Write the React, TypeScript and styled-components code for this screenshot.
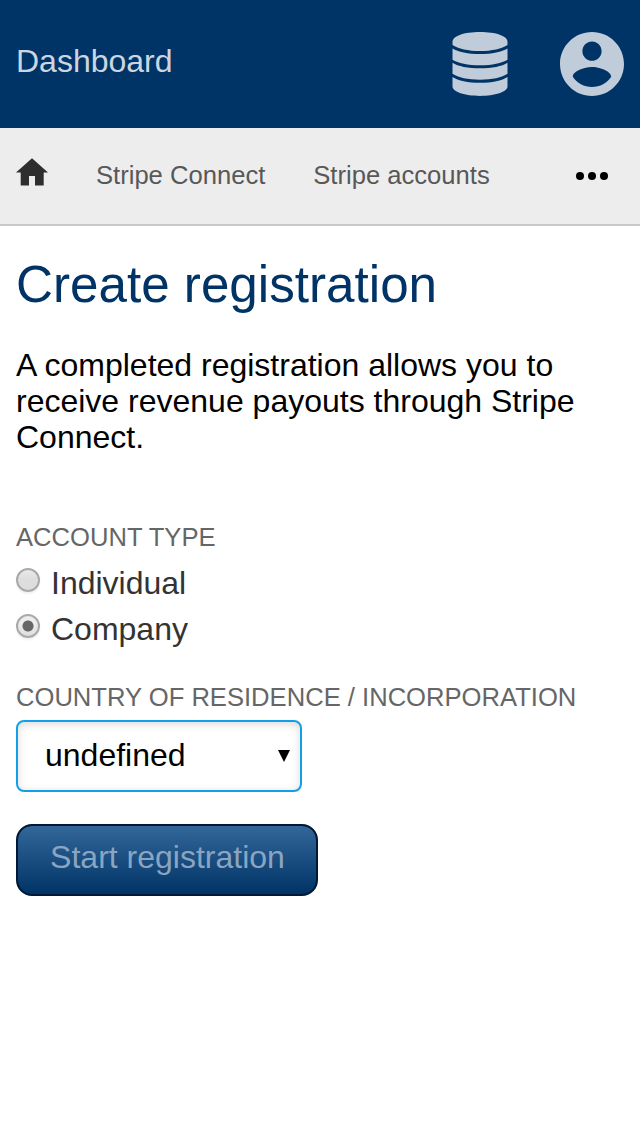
import React, { useState } from "react";
import styled, { createGlobalStyle } from "styled-components";

const GlobalStyle = createGlobalStyle`
  * { box-sizing: border-box; }
  body {
    margin: 0;
    background: #fff;
    color: #000;
    font: 32px/36px "Liberation Sans", Arial, sans-serif;
  }
`;

const Header = styled.header`
  display: flex;
  align-items: flex-start;
  height: 128px;
  padding: 32px 16px;
  background: #003366;
  color: #ccd6e0;
`;

const Brand = styled.div`
  flex: 1;
  padding-top: 11px;
`;

const HeaderIcons = styled.div`
  display: flex;
  gap: 52px;
  color: #c0ccd9;

  svg { display: block; }
`;

const Nav = styled.nav`
  display: flex;
  align-items: flex-start;
  gap: 48px;
  height: 98px;
  padding: 30px 32px 0 16px;
  background: #ededed;
  border-bottom: 2px solid #c8c8c8;
  font-size: 25.6px;
  line-height: 30px;
`;

const HomeIcon = styled.svg`
  display: block;
  fill: #2e2e2e;
`;

const NavLink = styled.a`
  padding-top: 2px;
  color: #585858;
  white-space: nowrap;
`;

const MoreIcon = styled.svg`
  display: block;
  margin: 14px 0 0 auto;
`;

const Main = styled.main`
  padding: 30px 16px 0;
`;

const Title = styled.h1`
  margin: 0 0 33px;
  color: #003366;
  font-size: 51.2px;
  line-height: 58px;
  font-weight: 400;
`;

const Intro = styled.p`
  margin: 0 0 67px;
`;

const FieldLabel = styled.div`
  color: #666;
  font-size: 25.6px;
  line-height: 30px;
  text-transform: uppercase;
  white-space: nowrap;
`;

const RadioList = styled.div`
  display: flex;
  flex-direction: column;
  gap: 10px;
  margin: 13px 0 35px;
`;

const RadioRow = styled.label`
  display: flex;
  gap: 11px;
  height: 36px;
  color: #333;
`;

const Radio = styled.input`
  appearance: none;
  flex: none;
  width: 24px;
  height: 24px;
  margin: 3px 0 0;
  border: 2px solid #a9a9a9;
  border-radius: 50%;
  background: linear-gradient(#e9e9e9, #dedede 45%, #dcdcdc);
  box-shadow: 0 2px 2px rgba(0, 0, 0, 0.06);

  &:checked {
    background: radial-gradient(circle, #666 5px, transparent 6px),
      linear-gradient(#ededed, #ededed 38%, #dedede);
  }
`;

const CountrySelect = styled.button`
  display: flex;
  align-items: center;
  justify-content: space-between;
  width: 286px;
  height: 72px;
  margin: 8px 0 32px;
  padding: 0 10px 2px 27px;
  border: 2px solid #139fe8;
  border-radius: 8px;
  background: #fff;
  box-shadow: inset 0 2px 8px rgba(0, 0, 0, 0.15);
  color: #000;
  font: inherit;
`;

const SelectArrow = styled.svg`
  margin-top: 2px;
`;

const SubmitButton = styled.button`
  display: block;
  width: 302px;
  height: 72px;
  padding: 0 0 6px 1px;
  border: 2px solid #001a33;
  border-radius: 16px;
  background: linear-gradient(#336699, #003366) padding-box, #001f3d;
  color: #8aa5c1;
  font: inherit;
`;

const DatabaseIcon = () => (
  <svg width="56" height="64" viewBox="0 0 56 64" fill="currentColor">
    <path d="M.5 9.700C.5 4 12 0 28 0s27.500 4 27.500 9.700v3.200C50 16.500 40 19 28 19S6 16.500 .5 12.900z" />
    <path d="M.5 16.500C6 20 16 22 28 22s22-2 27.500-5.500v11.200C50 31.200 40 33.200 28 33.200S6 31.200 .5 27.700z" />
    <path d="M.5 30.700C6 34.300 16 36.300 28 36.300s22-2 27.500-5.600v11.100C50 45.600 40 47.700 28 47.700S6 45.600 .5 41.800z" />
    <path d="M.5 44.900C6 48.700 16 50.700 28 50.700s22-2 27.500-5.800v9.700C55.500 60 43 64 28 64S.5 60 .5 54.600z" />
  </svg>
);

const AccountIcon = () => (
  <svg width="64" height="64" viewBox="2 2 20 20" fill="currentColor">
    <path d="M12 2C6.480 2 2 6.480 2 12s4.480 10 10 10 10-4.480 10-10S17.520 2 12 2zm0 3c1.660 0 3 1.340 3 3s-1.340 3-3 3-3-1.340-3-3 1.340-3 3-3zm0 14.200c-2.500 0-4.710-1.280-6-3.220.03-1.990 4-3.080 6-3.080 1.990 0 5.970 1.090 6 3.080-1.290 1.940-3.500 3.220-6 3.220z" />
  </svg>
);

const accountTypes = ["Individual", "Company"];

export default function App() {
  const [accountType, setAccountType] = useState("Company");

  return (
    <>
      <GlobalStyle />
      <Header>
        <Brand>Dashboard</Brand>
        <HeaderIcons>
          <DatabaseIcon />
          <AccountIcon />
        </HeaderIcons>
      </Header>
      <Nav>
        <HomeIcon width="32" height="28" viewBox="0 0 32 28">
          <path d="M16 .3 32 14.500h-4.300v13H19v-9.500h-6v9.500H4.700v-13H0z" />
        </HomeIcon>
        <NavLink>Stripe Connect</NavLink>
        <NavLink>Stripe accounts</NavLink>
        <MoreIcon width="32" height="8" viewBox="0 0 32 8">
          <circle cx="4" cy="4" r="4" />
          <circle cx="16" cy="4" r="4" />
          <circle cx="28" cy="4" r="4" />
        </MoreIcon>
      </Nav>
      <Main>
        <Title>Create registration</Title>
        <Intro>
          A completed registration allows you to receive revenue payouts through
          Stripe Connect.
        </Intro>
        <FieldLabel>Account type</FieldLabel>
        <RadioList>
          {accountTypes.map((type) => (
            <RadioRow key={type}>
              <Radio
                type="radio"
                name="account-type"
                checked={accountType === type}
                onChange={() => setAccountType(type)}
              />
              {type}
            </RadioRow>
          ))}
        </RadioList>
        <FieldLabel>Country of residence / incorporation</FieldLabel>
        <CountrySelect type="button">
          undefined
          <SelectArrow width="12" height="12" viewBox="0 0 12 12">
            <path d="M0 0h12L6 12z" />
          </SelectArrow>
        </CountrySelect>
        <SubmitButton type="button">Start registration</SubmitButton>
      </Main>
    </>
  );
}
